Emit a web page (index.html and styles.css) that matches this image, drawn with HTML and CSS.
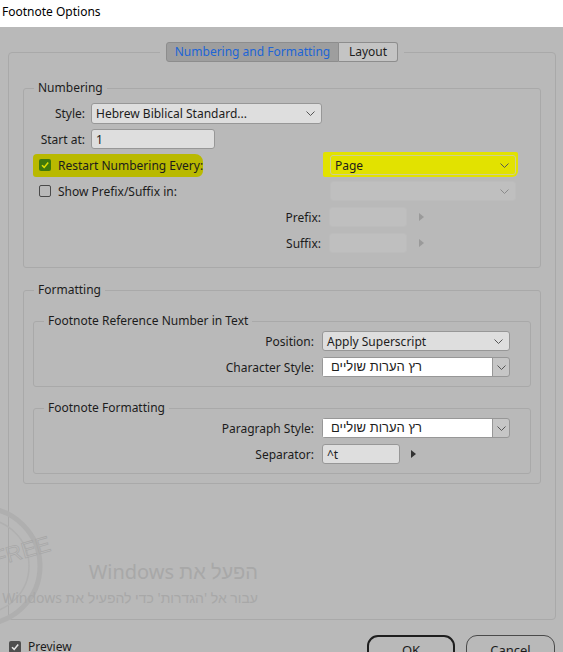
FILE: index.html
```html
<!DOCTYPE html>
<html lang="en">
<head>
    <meta charset="UTF-8">
    <meta name="viewport" content="width=device-width, initial-scale=1.0">
    <title>Footnote Options</title>
    <link rel="stylesheet" href="styles.css">
</head>
<body>

    <div class="titlebar">Footnote Options</div>

    <div class="dialog">
        <fieldset class="panel">
            <legend class="tabs">
                <span class="tab active">Numbering and Formatting</span><span class="tab layout">Layout</span>
            </legend>

            <!-- Numbering group -->
            <fieldset class="group">
                <legend>Numbering</legend>

                <div class="row">
                    <span class="lbl num-lbl">Style:</span>
                    <div class="select style-select">
                        <span>Hebrew Biblical Standard...</span>
                        <svg class="chev" width="9" height="5" viewBox="0 0 9 5"><path d="M0.5 0.5 L4.5 4.5 L8.5 0.5" fill="none" stroke="#555" stroke-width="1"/></svg>
                    </div>
                </div>

                <div class="row">
                    <span class="lbl num-lbl">Start at:</span>
                    <div class="input start-input">1</div>
                </div>

                <div class="row check-row">
                    <span class="marker">
                        <svg class="box" width="12" height="12" viewBox="0 0 12 12"><rect x="0" y="0" width="12" height="12" rx="2" fill="#3f780c"/><path d="M3 6.2 L5.2 8.4 L9.2 3.6" fill="none" stroke="#dede00" stroke-width="1.6"/></svg>
                        <span>Restart Numbering Every:</span>
                    </span>
                    <span class="page-mark">
                        <span class="select page-select">
                            <span>Page</span>
                            <svg class="chev" width="9" height="5" viewBox="0 0 9 5"><path d="M0.5 0.5 L4.5 4.5 L8.5 0.5" fill="none" stroke="#555" stroke-width="1"/></svg>
                        </span>
                    </span>
                </div>

                <div class="row check-row">
                    <span class="check">
                        <span class="box empty"></span>
                        <span>Show Prefix/Suffix in:</span>
                    </span>
                    <span class="select disabled page-select">
                        <span></span>
                        <svg class="chev" width="9" height="5" viewBox="0 0 9 5"><path d="M0.5 0.5 L4.5 4.5 L8.5 0.5" fill="none" stroke="#8a8a8a" stroke-width="1"/></svg>
                    </span>
                </div>

                <div class="row">
                    <span class="lbl fix-lbl">Prefix:</span>
                    <div class="input disabled fix-input"></div>
                    <span class="arrow dim"></span>
                </div>

                <div class="row">
                    <span class="lbl fix-lbl">Suffix:</span>
                    <div class="input disabled fix-input"></div>
                    <span class="arrow dim"></span>
                </div>
            </fieldset>

            <!-- Formatting group -->
            <fieldset class="group formatting">
                <legend>Formatting</legend>

                <fieldset class="group inner">
                    <legend>Footnote Reference Number in Text</legend>
                    <div class="row">
                        <span class="lbl fmt-lbl">Position:</span>
                        <div class="select fmt-select">
                            <span>Apply Superscript</span>
                            <svg class="chev" width="9" height="5" viewBox="0 0 9 5"><path d="M0.5 0.5 L4.5 4.5 L8.5 0.5" fill="none" stroke="#555" stroke-width="1"/></svg>
                        </div>
                    </div>
                    <div class="row">
                        <span class="lbl fmt-lbl">Character Style:</span>
                        <div class="combo">
                            <span class="combo-text heb">רץ הערות שוליים</span>
                            <span class="combo-btn">
                                <svg width="9" height="5" viewBox="0 0 9 5"><path d="M0.5 0.5 L4.5 4.5 L8.5 0.5" fill="none" stroke="#555" stroke-width="1"/></svg>
                            </span>
                        </div>
                    </div>
                </fieldset>

                <fieldset class="group inner second">
                    <legend>Footnote Formatting</legend>
                    <div class="row">
                        <span class="lbl fmt-lbl">Paragraph Style:</span>
                        <div class="combo">
                            <span class="combo-text heb">רץ הערות שוליים</span>
                            <span class="combo-btn">
                                <svg width="9" height="5" viewBox="0 0 9 5"><path d="M0.5 0.5 L4.5 4.5 L8.5 0.5" fill="none" stroke="#555" stroke-width="1"/></svg>
                            </span>
                        </div>
                    </div>
                    <div class="row">
                        <span class="lbl fmt-lbl">Separator:</span>
                        <div class="input sep-input">^t</div>
                        <span class="arrow"></span>
                    </div>
                </fieldset>
            </fieldset>
        </fieldset>

        <div class="footer">
            <span class="check preview">
                <svg class="box" width="12" height="12" viewBox="0 0 12 12"><rect x="0" y="0" width="12" height="12" rx="2" fill="#4f4f4f"/><path d="M3 6.2 L5.2 8.4 L9.2 3.6" fill="none" stroke="#e6e6e6" stroke-width="1.6"/></svg>
                <span>Preview</span>
            </span>
            <div class="buttons">
                <span class="button ok">OK</span>
                <span class="button">Cancel</span>
            </div>
        </div>
    </div>

    <!-- Windows activation watermark over the dialog -->
    <svg class="stamp" width="120" height="130" viewBox="0 0 120 130">
        <circle cx="42" cy="64" r="58" fill="none" stroke="#afafaf" stroke-width="5"/>
        <circle cx="42" cy="64" r="47" fill="none" stroke="#b0b0b0" stroke-width="1.5"/>
        <path d="M40 95 q10 -6 18 2 q-4 8 -14 6 z" fill="#a9a9a9"/>
        <text x="52" y="60" transform="rotate(-16 70 50)" font-family="Liberation Sans, sans-serif" font-size="22" fill="none" stroke="#a7a7a7" stroke-width="0.7">FREE</text>
    </svg>
    <div class="activate">
        <div class="act-title">הפעל את Windows</div>
        <div class="act-sub">עבור אל 'הגדרות' כדי להפעיל את Windows</div>
    </div>

</body>
</html>
```

FILE: styles.css
```css
body {
    margin: 0;
    background-color: #b9b9b9;
    font-family: "Noto Sans", "Liberation Sans", sans-serif;
    font-size: 12px;
    color: #1c1c1c;
    height: 652px;
    overflow: hidden;
    position: relative;
}
.titlebar {
    background-color: #fff;
    height: 27px;
    line-height: 24px;
    padding-left: 2px;
    color: #000;
}
.dialog {
    padding-top: 15px;
}

/* Outer tab panel */
.panel {
    margin: 0 0 0 8px;
    padding: 18px 14px 135px 14px;
    border: 1px solid #a9a9a9;
    border-radius: 4px;
    box-sizing: border-box;
    width: 548px;
}
.tabs {
    margin: 0 auto;
    padding: 0 6px;
    display: flex;
}
.tab {
    display: inline-block;
    height: 18px;
    line-height: 18px;
    text-align: center;
    border: 1px solid #8d8d8d;
}
.tab.active {
    width: 171px;
    background-color: #9e9e9e;
    color: #2065d6;
    border-radius: 3px 0 0 3px;
}
.tab.layout {
    width: 58px;
    background-color: #c4c4c4;
    border-left: none;
    border-radius: 0 3px 3px 0;
}

/* Group boxes */
.group {
    margin: 0;
    padding: 7px 0 14px 0;
    border: 1px solid #a9a9a9;
    border-radius: 3px;
}
.group legend {
    margin-left: 10px;
    padding: 0 4px;
    line-height: 16px;
}
.formatting {
    margin-top: 14px;
    padding: 15px 0 9px 0;
}
.inner {
    margin: 0 9px;
    padding: 2px 0 9px 0;
}
.inner.second {
    margin-top: 13px;
}

.row {
    display: flex;
    align-items: center;
    height: 20px;
    margin-top: 6px;
}
.row:first-of-type {
    margin-top: 0;
}
.lbl {
    text-align: right;
    flex-shrink: 0;
}
.num-lbl {
    width: 61px;
    margin-right: 6px;
}
.fix-lbl {
    width: 297px;
    margin-right: 8px;
}
.fmt-lbl {
    width: 280px;
    margin-right: 8px;
}

/* Controls */
.select, .input {
    box-sizing: border-box;
    height: 20px;
    border: 1px solid #979797;
    border-radius: 3px;
    background-color: #dedede;
    display: flex;
    align-items: center;
    padding: 0 4px;
}
.select {
    justify-content: space-between;
    padding-right: 6px;
}
.style-select {
    width: 231px;
    height: 21px;
}
.start-input {
    width: 124px;
}
.disabled {
    background-color: #bfbfbf;
    border-color: #bcbcbc;
}
.fix-input {
    width: 78px;
}
.fmt-select {
    width: 188px;
}
.sep-input {
    width: 78px;
}
.combo {
    box-sizing: border-box;
    width: 188px;
    height: 20px;
    display: flex;
    border: 1px solid #979797;
    border-radius: 3px;
    background-color: #c6c6c6;
}
.combo-text {
    width: 170px;
    background-color: #fff;
    padding-left: 8px;
    box-sizing: border-box;
    line-height: 18px;
    border-right: 1px solid #979797;
}
.combo-btn {
    flex: 1;
    display: flex;
    align-items: center;
    justify-content: center;
}
.heb {
    font-family: "Liberation Sans", "DejaVu Sans", sans-serif;
    font-size: 13px;
}

.arrow {
    width: 0;
    height: 0;
    border-top: 4px solid transparent;
    border-bottom: 4px solid transparent;
    border-left: 5px solid #333;
    margin-left: 11px;
}
.arrow.dim {
    border-left-color: #9a9a9a;
    margin-left: 12px;
}

/* Checkbox rows */
.check-row {
    justify-content: space-between;
    padding: 0 24px 0 15px;
}
.check, .marker {
    display: flex;
    align-items: center;
    gap: 7px;
}
.marker {
    background-color: #b9b900;
    margin: -3px 0 -3px -6px;
    padding: 3px 0 3px 6px;
    border-radius: 4px 8px 6px 3px;
}
.box.empty {
    box-sizing: border-box;
    width: 12px;
    height: 12px;
    border: 1px solid #4a4a4a;
    border-radius: 2px;
}
.page-mark {
    background-color: #e2e200;
    margin: -3px -2px -2px -7px;
    padding: 3px 2px 2px 7px;
    border-radius: 2px 2px 6px 2px;
}
.page-select {
    width: 186px;
}
.page-mark .select {
    background-color: #e2e200;
    border-color: #cfcf90;
}

/* Footer */
.footer {
    display: flex;
    justify-content: space-between;
    align-items: flex-start;
    margin-top: 15px;
    padding: 0 8px 0 9px;
}
.preview {
    margin-top: 3px;
}
.buttons {
    display: flex;
    gap: 11px;
}
.button {
    box-sizing: border-box;
    width: 89px;
    height: 28px;
    border: 1px solid #4a4a4a;
    border-radius: 11px;
    text-align: center;
    line-height: 28px;
    font-size: 13px;
}
.button.ok {
    width: 88px;
    border: 2px solid #1e1e1e;
    line-height: 26px;
}

/* Activation watermark */
.stamp {
    position: absolute;
    left: -60px;
    top: 502px;
}
.activate {
    position: absolute;
    right: 305px;
    top: 558px;
    direction: rtl;
    color: #a8a8a8;
    white-space: nowrap;
}
.act-title {
    font-size: 20px;
    line-height: 28px;
}
.act-sub {
    font-size: 14px;
    line-height: 20px;
    margin-top: 2px;
}
```
